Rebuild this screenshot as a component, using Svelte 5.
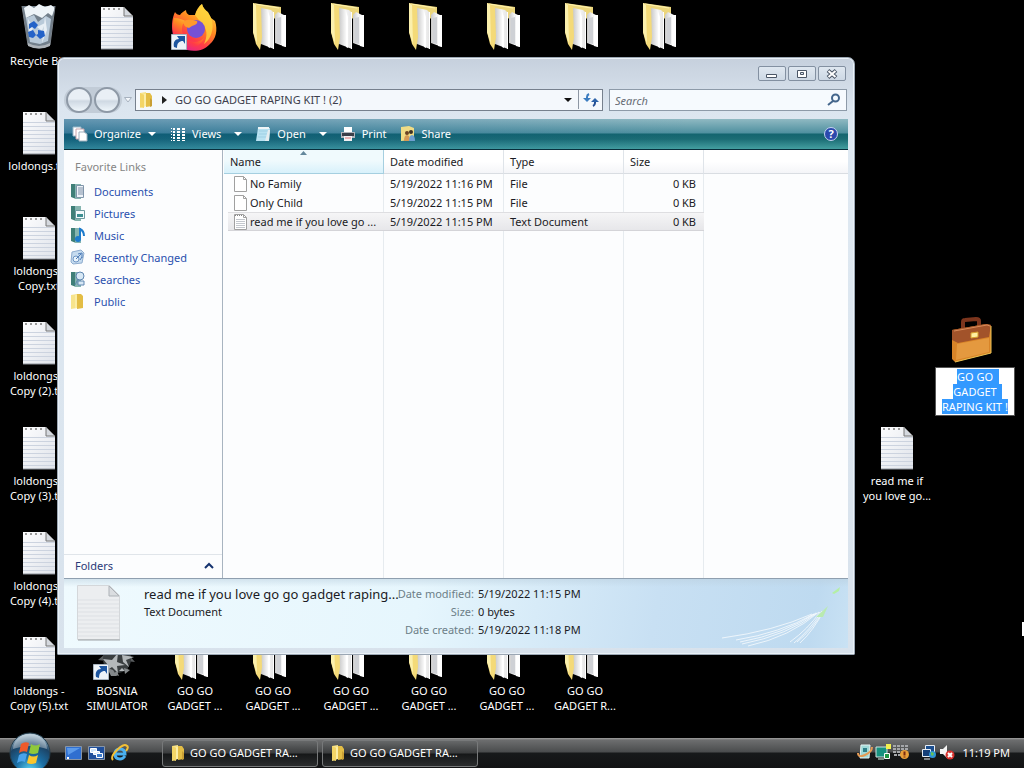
<script lang="ts">
  type DesktopItem = {
    icon: 'bin' | 'text' | 'firefox' | 'folder' | 'mine' | 'briefcase';
    col: number;
    row: number;
    label?: string;
    shortcut?: boolean;
    renaming?: boolean;
  };

  const desktopItems: DesktopItem[] = [
    { icon: 'bin', col: 1, row: 1, label: 'Recycle Bin' },
    { icon: 'text', col: 2, row: 1 },
    { icon: 'firefox', col: 3, row: 1, shortcut: true },
    ...[4, 5, 6, 7, 8, 9].map((col) => ({ icon: 'folder' as const, col, row: 1 })),
    { icon: 'text', col: 1, row: 2, label: 'loldongs.txt' },
    { icon: 'text', col: 1, row: 3, label: 'loldongs -\nCopy.txt' },
    ...[2, 3, 4, 5].map((n) => ({
      icon: 'text' as const,
      col: 1,
      row: n + 2,
      label: `loldongs -\nCopy (${n}).txt`
    })),
    { icon: 'mine', col: 2, row: 7, label: 'BOSNIA\nSIMULATOR', shortcut: true },
    ...[3, 4, 5, 6, 7].map((col) => ({
      icon: 'folder' as const,
      col,
      row: 7,
      label: 'GO GO\nGADGET ...'
    })),
    { icon: 'folder', col: 8, row: 7, label: 'GO GO\nGADGET R...' },
    { icon: 'text', col: 12, row: 5, label: 'read me if\nyou love go...' },
    { icon: 'briefcase', col: 13, row: 4, label: 'GO GO GADGET RAPING KIT !', renaming: true }
  ];

  const favorites = ['Documents', 'Pictures', 'Music', 'Recently Changed', 'Searches', 'Public'];

  const files = [
    { name: 'No Family', modified: '5/19/2022 11:16 PM', type: 'File', size: '0 KB' },
    { name: 'Only Child', modified: '5/19/2022 11:15 PM', type: 'File', size: '0 KB' },
    {
      name: 'read me if you love go ...',
      modified: '5/19/2022 11:15 PM',
      type: 'Text Document',
      size: '0 KB'
    }
  ];

  let selected = $state(2);
  let query = $state('');

  function selectAll(node: HTMLTextAreaElement) {
    node.focus();
    node.select();
  }
</script>

{#snippet smallFolder()}
  <svg width="16" height="16" viewBox="0 0 16 16" aria-hidden="true">
    <path d="M2 1l6-1v14l-6 2z" fill="#f7e48c" />
    <path d="M8 1h4l2 3v10l-6 1z" fill="#e3bd45" />
    <path d="M2 1l4 2v13l-4-1z" fill="#f3d566" />
    <path d="M7 2v12" stroke="#fff6c0" />
    <path d="M12 6l2 2v6l-2 1z" fill="#c99f35" />
  </svg>
{/snippet}

{#snippet textPage()}
  <path d="M8 4h23l9 9v33H8z" fill="url(#page)" />
  <path d="M8 14h32M8 18h32M8 22h32M8 26h32M8 30h32M8 34h32M8 38h32M8 42h32" stroke="#ccd3df" transform="translate(0 0.5)" />
  <path d="M31 4l9 9h-9z" fill="#d5d9df" stroke="#777" />
  <path d="M10 6h20" stroke="#999" stroke-width="2" stroke-dasharray="2 3" />
  <path d="M8 46h32" stroke="#8b9098" />
{/snippet}

{#snippet desktopIcon(item: DesktopItem)}
  <svg class="big-icon" width="48" height="48" viewBox="0 0 48 48" aria-hidden="true">
    {#if item.icon === 'bin'}
      <path d="M7 3h33l-5 39q-11 6-22 0z" fill="#8f9fae" fill-opacity="0.8" />
      <path d="M9 5l5-3 5 3 5-4 6 3 6-2 4 3-3 8-4-3-6 5-8-4-8 4z" fill="#eef4f8" />
      <path d="M11 15l8-3 4 7 8-6 5 3-3 22-8 3-10-2z" fill="#b9cad9" />
      <path d="M13 16l5 8-3 12zM30 13l2 14-5 13zM22 24l8-4-3 8z" fill="#e8eff5" />
      <path d="M14 21l5-3 4 4-3 4-3-2-3 2zM23 27l6 1 1 5-5 3-4-4 2-1zM13 29l5-2 3 5-3 3-4-1z" fill="#2463c8" />
      <path d="M7 3l6 39q11 6 22 0l5-39" fill="none" stroke="#7d858d" />
      <path d="M13 40q11 6 22 0v3q-11 5-22 0z" fill="#aeb4ba" />
    {:else if item.icon === 'text'}
      {@render textPage()}
    {:else if item.icon === 'firefox'}
      <path
        d="M4 9c1 2 3 3 5 3 1-2 4-4 6-5 0 2 1 4 3 5h6c1-5 4-9 7-11 1 4 3 6 6 8 1 2 2 4 3 6l4 3c3 9 1 18-5 23-7 8-20 9-29 3C0 38-1 19 4 9z"
        fill="url(#fx)"
      />
      <path d="M24 12c2-5 4-8 7-11 1 4 4 6 6 9 8 9 5 25-4 31 4-8 3-16-2-20z" fill="#ffd43c" fill-opacity="0.8" />
      <path d="M3 15c5 0 10 2 13 4l-4 2c-2 5-1 10 2 13 5 7 14 6 19 1-3 8-12 12-20 8C2 38 0 25 3 15z" fill="url(#fx)" />
      <circle cx="25" cy="26" r="9" fill="#7651d6" />
      <path d="M13 18c4-2 8-1 13 0 1 2-1 4-5 5l-3 2c-4-1-6-3-5-7z" fill="#ff9a2b" />
    {:else if item.icon === 'folder'}
      <path d="M4 0l28 4v12L8 14z" fill="#ecd67c" />
      <path d="M6 1l24 4" stroke="#fff3ad" />
      <path d="M12 5l10 2 3 3v36l-13-5z" fill="url(#sheet)" />
      <path d="M19 8l2 6v31l-2-1z" fill="#fff" />
      <path d="M26 12l3-3 8 4v31l-11-4z" fill="url(#sheet)" />
      <path d="M28 15l4-1v27l-4-1z" fill="#cfd1d5" />
      <path d="M24 9h1v37h-1zM33 12h4v32l-4-1z" fill="#fff" />
      <path d="M4 0l8 4 1 30-2 13-4-6-3-12z" fill="#f4da78" />
      <path d="M4 0l3 2 1 39-4-12z" fill="#fbf0ad" />
    {:else if item.icon === 'mine'}
      <path
        d="M15 13l5 3 4-9 3 8 8-5-2 8 11 0-8 4 6 7-9-1 2 10-7-6-4 7-4-7-8 5 1-9-8-1 7-6z"
        fill="#5a5d5f"
      />
      <circle cx="24" cy="26" r="14" fill="#3a3e40" />
      <path d="M10 26l9 1 6-7-1 9 8 3-8 1 1 7-6-6-6 4 2-6zM29 22l12 2-8 3 3 7-6-5zM26 38l3-3 3 3z" fill="#b4b8ba" />
      <path d="M14 35l6 2 4 6h-6zM31 35l6 2-5 4zM20 41l4-3 2 5z" fill="#85898b" />
    {:else}
      <path d="M12 11V4q0-2 2-2l11-1q3 0 3 2v7" fill="none" stroke="#7c351d" stroke-width="4" />
      <path d="M1 12l34-6 5 1v28L4 44 1 41z" fill="#d88428" />
      <path d="M1 12l34-6 5 1-2 12L7 25 1 22z" fill="#a2532a" />
      <path d="M3 13l33-6 3 1" fill="none" stroke="#d98b5b" />
      <path d="M6 26l32-6v14L5 42z" fill="#e9a349" fill-opacity="0.7" />
      <path d="M20 15l7-1v5l-7 1z" fill="#fff0a0" stroke="#d8a02e" />
      <path d="M40 8v27L4 44" fill="none" stroke="#eec556" />
    {/if}
    {#if item.shortcut}
      <path d="M0.500 31.500h15v15h-15z" fill="#eef3f8" stroke="#a9b4bf" />
      <path d="M3 44c-1-5 1-8 5-8l-2-3h8v8l-2-3c-4 0-6 2-6 7z" fill="#1d559f" />
    {/if}
  </svg>
{/snippet}

{#snippet linkIcon(name: string)}
  <svg width="16" height="16" viewBox="0 0 16 16" aria-hidden="true">
    {#if name === 'Recently Changed'}
      <path d="M2 3l9-2 3 3-2 10-9 1-2-2z" fill="#c5dbef" stroke="#8fadcf" />
      <circle cx="6" cy="10" r="3" fill="#e8f3fb" stroke="#6f95c3" />
      <path d="M6 10l5-5M8 5l4-1v5M10 11l2-3" fill="none" stroke="#4f7db8" />
    {:else if name === 'Public'}
      <path d="M1 2l6-1v14l-6 1z" fill="#f7e48c" />
      <path d="M7 1h4l2 2v12l-6 1z" fill="#e3bd45" />
      <path d="M6 2v13" stroke="#fff6c0" />
    {:else}
      <path d="M1 1h5v15l-5-2z" fill="#3f7f78" />
      <path d="M5 1h6v15H5z" fill="#86b5b0" />
      {#if name === 'Documents'}
        <path d="M6.500 2.500h7v12h-7z" fill="#eef3f8" stroke="#8095aa" />
        <path d="M8 5h5M8 7h5M8 9h5M8 11h5" stroke="#7e90a8" />
      {:else if name === 'Pictures'}
        <path d="M5.500 5.500h9v8h-9z" fill="#f4fafc" stroke="#6d9a9f" />
        <path d="M7 9h6v3H7z" fill="#3c8e91" />
      {:else if name === 'Music'}
        <path d="M10 12V2q4 2 4 7" fill="none" stroke="#1d7bcc" stroke-width="2" />
        <circle cx="8" cy="12" r="3" fill="#1d7bcc" />
      {:else}
        <circle cx="10" cy="5" r="4" fill="#d7e8f5" stroke="#5f86b0" />
        <path d="M8 8l-3 6M8 10h6v4H8z" fill="#d7e8f5" stroke="#5f86b0" />
      {/if}
    {/if}
  </svg>
{/snippet}

{#snippet caret()}
  <svg class="caret" width="8" height="4" viewBox="0 0 8 4" aria-hidden="true"><path d="M0 0h8L4 4z" fill="currentColor" /></svg>
{/snippet}

<svg class="defs" width="0" height="0" aria-hidden="true">
  <linearGradient id="fx" x1="0.8" y1="0" x2="0.2" y2="1">
    <stop offset="0" stop-color="#ffe14a" />
    <stop offset="0.4" stop-color="#ff8a20" />
    <stop offset="0.7" stop-color="#ff3b47" />
    <stop offset="1" stop-color="#e0219a" />
  </linearGradient>
  <linearGradient id="page" x1="0" y1="0" x2="1" y2="1">
    <stop offset="0" stop-color="#fdfdfe" />
    <stop offset="1" stop-color="#dfe3ea" />
  </linearGradient>
  <linearGradient id="sheet" x1="0" y1="0" x2="1" y2="0">
    <stop offset="0" stop-color="#c9c9c9" />
    <stop offset="0.5" stop-color="#f6f6f6" />
    <stop offset="1" stop-color="#e2e2e2" />
  </linearGradient>
  <radialGradient id="orb" cx="0.5" cy="0.95" r="0.9">
    <stop offset="0" stop-color="#5fd8f5" />
    <stop offset="0.4" stop-color="#1b6fa5" />
    <stop offset="0.75" stop-color="#1c4466" />
    <stop offset="1" stop-color="#9db7c8" />
  </radialGradient>
</svg>

<div class="screen">
  <main class="desktop">
    <div class="items">
      {#each desktopItems as item}
        <div class="item" style="grid-column: {item.col}; grid-row: {item.row}">
          {@render desktopIcon(item)}
          {#if item.renaming}
            <textarea class="rename" rows="3" aria-label="Name" spellcheck="false" value={item.label} use:selectAll></textarea>
          {:else if item.label}
            <span class="label">{item.label}</span>
          {/if}
        </div>
      {/each}
    </div>

    <section class="window">
      <header class="titlebar">
        <button class="winbtn" aria-label="Minimize">
          <svg width="14" height="12" viewBox="0 0 14 12"><path d="M1.500 6.500h10v3h-10z" fill="#fff" stroke="#4b5666" /></svg>
        </button>
        <button class="winbtn" aria-label="Maximize">
          <svg width="14" height="12" viewBox="0 0 14 12">
            <path d="M2.500 2.500h9v7h-9z" fill="#fff" stroke="#4b5666" /><path d="M5.500 4.500h3v2h-3z" fill="#dde5ee" stroke="#4b5666" />
          </svg>
        </button>
        <button class="winbtn" aria-label="Close">
          <svg width="14" height="12" viewBox="0 0 14 12">
            <path d="M3 2.500l8 7M11 2.500l-8 7" stroke="#4b5666" stroke-width="4" /><path d="M3.500 3l7 6M10.500 3l-7 6" stroke="#fff" stroke-width="2" />
          </svg>
        </button>
      </header>

      <div class="navrow">
        <div class="travel">
          <button class="round" aria-label="Back"></button>
          <button class="round" aria-label="Forward"></button>
        </div>
        <button class="recent" aria-label="Recent pages">
          <svg width="8" height="6" viewBox="0 0 8 6"><path d="M0.500 0.500h7L4 5z" fill="#f3f7fb" stroke="#a7b2bf" /></svg>
        </button>
        <div class="address">
          {@render smallFolder()}
          <svg class="crumb-arrow" width="5" height="8" viewBox="0 0 5 8" aria-hidden="true"><path d="M0 0l5 4-5 4z" fill="#222" /></svg>
          <button class="crumb">GO GO GADGET RAPING KIT ! (2)</button>
          <button class="drop" aria-label="Previous locations">{@render caret()}</button>
          <button class="refresh" aria-label="Refresh">
            <svg width="16" height="16" viewBox="0 0 16 16">
              <path d="M6 2Q4 3 4 5v3" fill="none" stroke="#3c7dc0" stroke-width="2" /><path d="M0 6h8l-4 4z" fill="#3c7dc0" />
              <path d="M10 14q2-1 2-3V9" fill="none" stroke="#244f94" stroke-width="2" /><path d="M8 10h8l-4-4z" fill="#2c62a8" />
            </svg>
          </button>
        </div>
        <label class="search">
          <input type="text" placeholder="Search" aria-label="Search" bind:value={query} />
          <svg width="14" height="14" viewBox="0 0 14 14" aria-hidden="true">
            <circle cx="8.500" cy="5" r="3.500" fill="#f4faff" stroke="#44668c" stroke-width="2" />
            <path d="M6 8l-5 4" stroke="#44668c" stroke-width="2" />
          </svg>
        </label>
      </div>

      <nav class="toolbar">
        <button class="tool organize">
          <svg width="16" height="16" viewBox="0 0 16 16" aria-hidden="true">
            <path d="M1 1h8v9H1z" fill="#fff" stroke="#9bb6c8" /><path d="M4 3h8v10H4z" fill="#fff" stroke="#c9a4ab" />
            <path d="M7 6h5l3 2v7H7z" fill="#fff" stroke="#9fb0bd" />
          </svg>
          Organize {@render caret()}
        </button>
        <button class="tool views">
          <svg width="16" height="16" viewBox="0 0 16 16" aria-hidden="true">
            <path d="M1.500 2v13" stroke="#fff" stroke-dasharray="1 2" />
            <path d="M4 2v13" stroke="#fff" stroke-width="2" stroke-dasharray="2 1" />
            <path d="M8.500 2v13M13.500 2v13" stroke="#fff" stroke-width="3" stroke-dasharray="2 1" />
          </svg>
          Views {@render caret()}
        </button>
        <button class="tool open">
          <svg width="16" height="16" viewBox="0 0 16 16" aria-hidden="true">
            <path d="M3 2h12l-1 13H1z" fill="#b8e2f2" /><path d="M3 1h11v2H3z" fill="#f0f6f8" />
            <path d="M4 5h9M4 8h9M3 11h9" stroke="#9fd0e4" /><path d="M13 4h2l-1 11h-4z" fill="#e5edf0" />
          </svg>
          Open {@render caret()}
        </button>
        <button class="tool print">
          <svg width="16" height="16" viewBox="0 0 16 16" aria-hidden="true">
            <path d="M4 1h8v6H4z" fill="#fff" /><path d="M1 6h14v6H1z" fill="#b0b5bc" /><path d="M2 7h12v3H2z" fill="#3a3f49" />
            <path d="M4 10h8v5H4z" fill="#f1f1f4" /><path d="M5 12h6" stroke="#d77" />
          </svg>
          Print
        </button>
        <button class="tool">
          <svg width="16" height="16" viewBox="0 0 16 16" aria-hidden="true">
            <path d="M1 1l8-1 5 2v12L1 15z" fill="#f0dc85" /><circle cx="7" cy="7" r="2" fill="#6b4323" /><circle cx="11" cy="6" r="2" fill="#3d3024" />
            <path d="M4 15q0-6 3-6t3 6z" fill="#d59a55" /><path d="M9 15q0-6 3-6t3 6z" fill="#6e9fd0" />
          </svg>
          Share
        </button>
        <button class="help" aria-label="Help">?</button>
      </nav>

      <div class="content">
        <aside class="sidebar">
          <h2>Favorite Links</h2>
          <ul>
            {#each favorites as name}
              <li><a href="#{name}">{@render linkIcon(name)}{name}</a></li>
            {/each}
          </ul>
          <button class="folders">
            Folders
            <svg width="10" height="7" viewBox="0 0 10 7" aria-hidden="true"><path d="M1 6l4-4 4 4" fill="none" stroke="#15336f" stroke-width="2" /></svg>
          </button>
        </aside>

        <div class="listing">
          <table>
            <thead>
              <tr>
                <th class="name sorted">
                  Name
                  <svg class="sort" width="7" height="4" viewBox="0 0 7 4" aria-hidden="true"><path d="M0 4l3.500-4L7 4z" fill="#64889c" /></svg>
                </th>
                <th class="date">Date modified</th>
                <th class="type">Type</th>
                <th class="size">Size</th>
                <th class="rest"></th>
              </tr>
            </thead>
            <tbody>
              {#each files as file, i}
                <tr class:selected={i === selected} onclick={() => (selected = i)}>
                  <td class="name">
                    <span class="file">
                      <svg width="14" height="16" viewBox="0 0 14 16" aria-hidden="true">
                        <path d="M0.500 0.500h9l3 3v12h-12z" fill="#fff" stroke="#a0a0a0" />
                        <path d="M9.500 0.500v3h3" fill="none" stroke="#a0a0a0" />
                        {#if file.type === 'Text Document'}
                          <path d="M2 5.500h9M2 7.500h9M2 9.500h9M2 11.500h9M2 13.500h9" stroke="#c4c8ce" />
                          <path d="M1 1.500h8" stroke="#888" stroke-dasharray="1 1" />
                        {/if}
                      </svg>
                      {file.name}
                    </span>
                  </td>
                  <td>{file.modified}</td>
                  <td>{file.type}</td>
                  <td class="num">{file.size}</td>
                  <td class="rest"></td>
                </tr>
              {/each}
            </tbody>
          </table>
        </div>
      </div>

      <footer class="details">
        <svg class="preview" width="46" height="56" viewBox="0 0 46 56" aria-hidden="true">
          <path d="M1.500 0.500h32l10 10v44h-42z" fill="#eceef0" stroke="#d4d7da" />
          <path d="M2 15h41M2 19h41M2 23h41M2 27h41M2 31h41M2 35h41M2 39h41M2 43h41M2 47h41M2 51h41" stroke="#dde0e4" />
          <path d="M33 1v10h10z" fill="#dadde0" stroke="#adb2b7" />
          <path d="M2 55h42" stroke="#9da2a6" />
        </svg>
        <div class="summary">
          <strong>read me if you love go go gadget raping...</strong>
          <span>Text Document</span>
        </div>
        <dl>
          <dt>Date modified:</dt>
          <dd>5/19/2022 11:15 PM</dd>
          <dt>Size:</dt>
          <dd>0 bytes</dd>
          <dt>Date created:</dt>
          <dd>5/19/2022 11:18 PM</dd>
        </dl>
        <svg class="swoosh" width="128" height="64" viewBox="0 0 128 64" aria-hidden="true">
          <g fill="none" stroke="#fff" stroke-opacity="0.7">
            <path d="M2 53Q54 46 92 29M16 55Q60 48 94 29M20 57Q64 49 96 28M22 59Q68 50 97 28M28 61Q70 52 99 27" />
            <path d="M70 57Q88 44 100 27M74 58Q90 45 102 26M77 57Q93 44 103 26M80 58Q94 45 104 25" />
          </g>
          <path d="M96 32l12-11-5 11z" fill="#b9eab0" /><path d="M112 8l8-6-1 4-5 3z" fill="#b4efa4" />
        </svg>
      </footer>
    </section>

    <svg class="pointer" width="2" height="14" viewBox="0 0 2 14" aria-hidden="true"><path d="M1 0v14" stroke="#fff" stroke-width="2" /></svg>
  </main>

  <footer class="taskbar">
    <button class="start" aria-label="Start">
      <svg width="42" height="42" viewBox="0 0 42 42">
        <circle cx="21" cy="21" r="20" fill="url(#orb)" stroke="#263f4e" />
        <path d="M4 17a17 15 0 0 1 34 0q-17-6-34 0z" fill="#fff" fill-opacity="0.35" />
        <path d="M12 12q4-3 8-1l-2 9q-4-2-8 1z" fill="#ef5a2a" />
        <path d="M22 12q4 3 9 0l-2 9q-5 2-9 0z" fill="#8fc93a" />
        <path d="M10 23q4-3 8-1l-2 8q-4-2-8 1z" fill="#4aa3ea" />
        <path d="M20 23q4 3 9 0l-2 8q-5 2-9 0z" fill="#fbc62c" />
      </svg>
    </button>
    <div class="quick">
      <button aria-label="Show desktop">
        <svg width="17" height="14" viewBox="0 0 17 14"><path d="M0.500 0.500h16v13h-16z" fill="#2f6fd0" stroke="#8795a6" /><path d="M2 2h13L3 9z" fill="#5b9aea" /><path d="M2 12h2" stroke="#fff" stroke-width="2" /></svg>
      </button>
      <button aria-label="Switch between windows">
        <svg width="17" height="14" viewBox="0 0 17 14"><path d="M0.500 0.500h16v13h-16z" fill="#1f4f9c" stroke="#8795a6" /><path d="M2.500 2.500h6v4h-6zM5.500 5.500h6v3h-6z" fill="#cfe4fa" stroke="#fff" /><path d="M8.500 7.500h6v4h-6z" fill="#3f7dcc" stroke="#fff" /></svg>
      </button>
      <button aria-label="Internet Explorer">
        <svg width="18" height="18" viewBox="0 0 18 18">
          <path d="M4 10h10q0-5-5-5t-5 5q0 5 5 5 3 0 5-3" fill="none" stroke="#4bb0ee" stroke-width="3" />
          <path d="M2 16Q-1 13 6 6T16 2q2 1-1 5" fill="none" stroke="#f3c035" stroke-width="2" />
        </svg>
      </button>
    </div>
    <div class="tasks">
      <button class="task">{@render smallFolder()}GO GO GADGET RA...</button>
      <button class="task">{@render smallFolder()}GO GO GADGET RA...</button>
    </div>
    <div class="tray">
      <svg width="16" height="16" viewBox="0 0 16 16" aria-hidden="true">
        <path d="M4 1h9l-1 13H3z" fill="#9fd9d8" stroke="#e6f4f4" /><path d="M6 4h4v4H6z" fill="#2d7f89" />
        <path d="M1 9q0 5 7 2t7-8" fill="none" stroke="#e49b55" stroke-width="2" />
      </svg>
      <svg width="16" height="16" viewBox="0 0 16 16" aria-hidden="true">
        <path d="M1 3h11v10H1z" fill="#18917f" stroke="#cfe5e2" /><path d="M11 0h5v5h-5z" fill="#f3f04e" /><path d="M9.500 9.500h5v5h-5z" fill="#294" stroke="#fff" /><path d="M3 15h6" stroke="#dfe" />
      </svg>
      <svg class="update" width="16" height="16" viewBox="0 0 16 16" aria-hidden="true">
        <path d="M0 2h15M0 5h15M0 8h9M1 11h7" stroke="#a5a7aa" stroke-width="2" stroke-dasharray="3 1" />
        <circle cx="11.500" cy="10.500" r="4.500" fill="#e9a03a" /><path d="M11.500 7.500v4M11.500 12.500v1" stroke="#7b2a10" stroke-width="2" />
      </svg>
      <svg width="16" height="16" viewBox="0 0 16 16" aria-hidden="true">
        <path d="M4.500 1.500h9v7h-9z" fill="#1b4e8f" stroke="#e6edf5" /><path d="M1.500 5.500h8v7h-8z" fill="#153f78" stroke="#e6edf5" /><path d="M3 15h6" stroke="#e6edf5" />
        <circle cx="11.500" cy="10.500" r="3.500" fill="#2e94d6" /><path d="M10 8l3 1-1 3-2-1z" fill="#66c156" />
      </svg>
      <svg width="16" height="16" viewBox="0 0 16 16" aria-hidden="true">
        <path d="M1 5h3l4-4v13L4 10H1z" fill="#f4f4f4" /><circle cx="11" cy="11" r="4.500" fill="#d9322e" /><path d="M9 9l4 4M13 9l-4 4" stroke="#fff" stroke-width="2" />
      </svg>
      <time>11:19 PM</time>
    </div>
  </footer>
</div>

<style>
  :global(body) {
    background: #000;
  }

  .screen {
    display: flex;
    flex-direction: column;
    min-height: 100vh;
    font: 11px/15px 'Noto Sans', 'Open Sans', sans-serif;
    color: #1b1b24;
    overflow: hidden;
  }

  button {
    font: inherit;
    color: inherit;
    background: none;
    border: none;
    padding: 0;
    display: flex;
    align-items: center;
    cursor: pointer;
  }

  svg {
    display: block;
    flex-shrink: 0;
  }

  .defs {
    position: absolute;
  }

  .desktop {
    position: relative;
    flex: 1;
    background: #000;
  }

  .items {
    display: grid;
    grid-template-columns: repeat(13, 78px);
    grid-template-rows: repeat(7, 105px);
    margin-bottom: -5px;
  }

  .item {
    display: flex;
    flex-direction: column;
    align-items: center;
    padding-top: 3px;
  }

  .big-icon {
    overflow: visible;
  }

  .label {
    margin-top: 2px;
    color: #fff;
    text-align: center;
    white-space: pre;
  }

  .rename {
    box-sizing: border-box;
    width: 80px;
    height: 49px;
    margin-top: 1px;
    padding: 1px 2px;
    border: 1px solid #555;
    outline: none;
    background: #fff;
    color: #1b1b24;
    font: inherit;
    text-align: center;
    resize: none;
    overflow: hidden;
  }

  .rename::selection {
    background: #3399ff;
    color: #fff;
  }

  /* explorer window */
  .window {
    position: absolute;
    inset: 57px 169px 83px 57px;
    box-sizing: border-box;
    display: flex;
    flex-direction: column;
    padding: 0 6px 6px;
    border: 1px solid #9ba7b4;
    border-radius: 7px 7px 1px 1px;
    background: linear-gradient(#c6d0dd, #dbe5ef 50px, #dfe9f2 90px, #d8e2ec);
    box-shadow: inset 0 0 0 1px #eaf1f7;
  }

  .titlebar {
    display: flex;
    justify-content: flex-end;
    gap: 2px;
    height: 23px;
    padding: 8px 2px 0 0;
  }

  .winbtn {
    justify-content: center;
    box-sizing: border-box;
    width: 28px;
    height: 15px;
    border: 1px solid #8390a1;
    border-radius: 2px;
    background: linear-gradient(#dfe7f0, #cdd8e4);
  }

  .navrow {
    display: flex;
    align-items: center;
    height: 22px;
    margin-bottom: 8px;
    padding-right: 1px;
  }

  .travel {
    display: flex;
    gap: 2px;
    padding: 0 2px;
    border-radius: 14px;
    background: #c2ccd7;
  }

  .round {
    box-sizing: border-box;
    width: 26px;
    height: 26px;
    border: 2px solid #8e99a6;
    border-radius: 50%;
    background: linear-gradient(#e9eff5 45%, #cfd9e3 55%, #eff6fb);
  }

  .recent {
    padding: 0 3px 0 2px;
  }

  .address {
    flex: 1;
    display: flex;
    align-items: center;
    box-sizing: border-box;
    height: 22px;
    margin-right: 6px;
    border: 1px solid #76808d;
    background: #f4f8fc;
    padding: 0 0 1px 2px;
    color: #3d3f4c;
  }

  .crumb-arrow {
    margin: 0 8px;
  }

  .crumb {
    flex: 1;
  }

  .drop {
    padding: 0 6px;
    color: #111;
  }

  .refresh {
    align-self: stretch;
    width: 24px;
    justify-content: center;
    border-left: 1px solid #8d97a4;
  }

  .search {
    display: flex;
    align-items: center;
    box-sizing: border-box;
    width: 238px;
    height: 22px;
    padding: 0 5px;
    border: 1px solid #8d9aa8;
    background: #f6fafe;
  }

  .search input {
    flex: 1;
    min-width: 0;
    padding: 0;
    border: none;
    outline: none;
    background: none;
    font: inherit;
    font-style: italic;
  }

  .search input::placeholder {
    color: #666c75;
    opacity: 1;
  }

  .toolbar {
    display: flex;
    align-items: center;
    box-sizing: border-box;
    height: 31px;
    padding: 0 10px 1px 8px;
    border-bottom: 1px solid #082f3c;
    background:
      linear-gradient(90deg, rgba(0, 70, 140, 0.3), transparent 80%),
      linear-gradient(#8fb9c2, #4f909f 14px, #14656f 15px, #1b6c74 20px, #449fa0 30px);
    color: #fff;
    text-shadow: 0 1px 2px #0b3a4a;
  }

  .tool {
    gap: 6px;
  }

  .tool .caret {
    margin-left: 1px;
  }

  .organize {
    margin-right: 14px;
  }

  .views {
    margin-right: 13px;
  }

  .tool.views .caret,
  .tool.open .caret {
    margin-left: 7px;
  }

  .open,
  .print {
    margin-right: 13px;
  }

  .help {
    justify-content: center;
    box-sizing: border-box;
    width: 14px;
    height: 14px;
    margin-left: auto;
    border: 1px solid #c5d3f2;
    border-radius: 50%;
    background: #2b49ad;
    font-weight: bold;
    line-height: 12px;
  }

  .content {
    flex: 1;
    display: flex;
    min-height: 0;
    background: #fcfdfe;
  }

  .sidebar {
    display: flex;
    flex-direction: column;
    box-sizing: border-box;
    width: 159px;
    border-right: 1px solid #a8b4c0;
  }

  .sidebar h2 {
    margin: 9px 11px 5px;
    font: inherit;
    color: #858585;
  }

  .sidebar ul {
    flex: 1;
    margin: 0;
    padding: 1px 0 0 6px;
    list-style: none;
  }

  .sidebar a {
    display: flex;
    align-items: center;
    gap: 8px;
    height: 22px;
    color: #2a50ae;
    text-decoration: none;
  }

  .folders {
    justify-content: space-between;
    height: 24px;
    padding: 0 8px 2px 11px;
    border-top: 1px solid #e0e5ea;
    color: #2a3a78;
  }

  .listing {
    flex: 1;
    padding-left: 1px;
    background:
      linear-gradient(#e6ebef, #e6ebef) 160px 0 / 1px 100% no-repeat,
      linear-gradient(#e6ebef, #e6ebef) 280px 0 / 1px 100% no-repeat,
      linear-gradient(#e6ebef, #e6ebef) 400px 0 / 1px 100% no-repeat,
      linear-gradient(#e6ebef, #e6ebef) 480px 0 / 1px 100% no-repeat;
  }

  table {
    width: 100%;
    table-layout: fixed;
    border-spacing: 0;
  }

  th {
    position: relative;
    box-sizing: border-box;
    height: 24px;
    padding: 0 6px;
    border-right: 1px solid #dfe4e9;
    border-bottom: 1px solid #d9dde2;
    background: linear-gradient(#fff 50%, #f4f5f8);
    font-weight: normal;
    text-align: left;
  }

  th.name {
    width: 160px;
  }

  th.date,
  th.type {
    width: 120px;
  }

  th.size {
    width: 80px;
  }

  th.rest {
    border-right: none;
  }

  th.sorted {
    border-color: #a5cfe0;
    background: linear-gradient(#f0fafd 45%, #d8f1fb);
  }

  .sort {
    position: absolute;
    top: 1px;
    left: 48%;
  }

  td {
    height: 19px;
    padding: 0 8px 0 6px;
    white-space: nowrap;
  }

  td.name {
    border-left: 4px solid transparent;
    padding-right: 0;
    background-clip: padding-box;
  }

  .file {
    display: flex;
    align-items: center;
    gap: 2px;
  }

  .num {
    text-align: right;
  }

  .selected td:not(.rest) {
    background: linear-gradient(#f6f6f7, #e6e6e9) padding-box;
    box-shadow:
      inset 0 1px #dedee1,
      inset 0 -1px #d4d4d8;
  }

  .details {
    display: flex;
    box-sizing: border-box;
    height: 70px;
    padding: 6px 0 0 12px;
    border-top: 1px solid #8f9faf;
    background:
      linear-gradient(#b9cedd80, transparent 8px),
      linear-gradient(100deg, #effafe, #e6f6fd 45%, #c8e0f3 75%, #bedaf0 95%, #c9e2f4);
    line-height: 18px;
  }

  .summary {
    width: 252px;
    margin-left: 22px;
    white-space: nowrap;
  }

  .summary strong,
  .summary span {
    display: block;
  }

  .summary strong {
    font-size: 13px;
    font-weight: normal;
  }

  dl {
    display: grid;
    grid-template-columns: 78px auto;
    grid-auto-rows: 18px;
    column-gap: 4px;
    margin: 0;
    white-space: nowrap;
  }

  dt {
    text-align: right;
    color: #6d7f88;
  }

  dd {
    margin: 0;
  }

  .swoosh {
    margin-left: auto;
  }

  .pointer {
    position: absolute;
    top: 622px;
    right: 0;
  }

  /* taskbar */
  .taskbar {
    position: relative;
    display: flex;
    align-items: center;
    box-sizing: border-box;
    height: 30px;
    padding: 0 14px 0 9px;
    background: linear-gradient(#a0a0a0, #6d6e6f 2px, #4a4c4d 14px, #17191a 15px, #121314);
    color: #fff;
  }

  .quick {
    display: flex;
    align-items: center;
    gap: 6px;
    margin: 0 33px 0 14px;
  }

  .tasks {
    flex: 1;
    display: flex;
    gap: 4px;
  }

  .task {
    box-sizing: border-box;
    width: 156px;
    height: 27px;
    padding: 0 0 1px 7px;
    gap: 4px;
    border: 1px solid #77797a;
    border-radius: 3px;
    background: linear-gradient(#666869, #3a3c3d 12px, #151718 13px, #2a2c2d);
  }

  .tray {
    display: flex;
    align-items: center;
    gap: 2px;
    padding-bottom: 2px;
  }

  .update {
    margin-right: 10px;
  }

  time {
    margin-left: 5px;
  }
</style>
